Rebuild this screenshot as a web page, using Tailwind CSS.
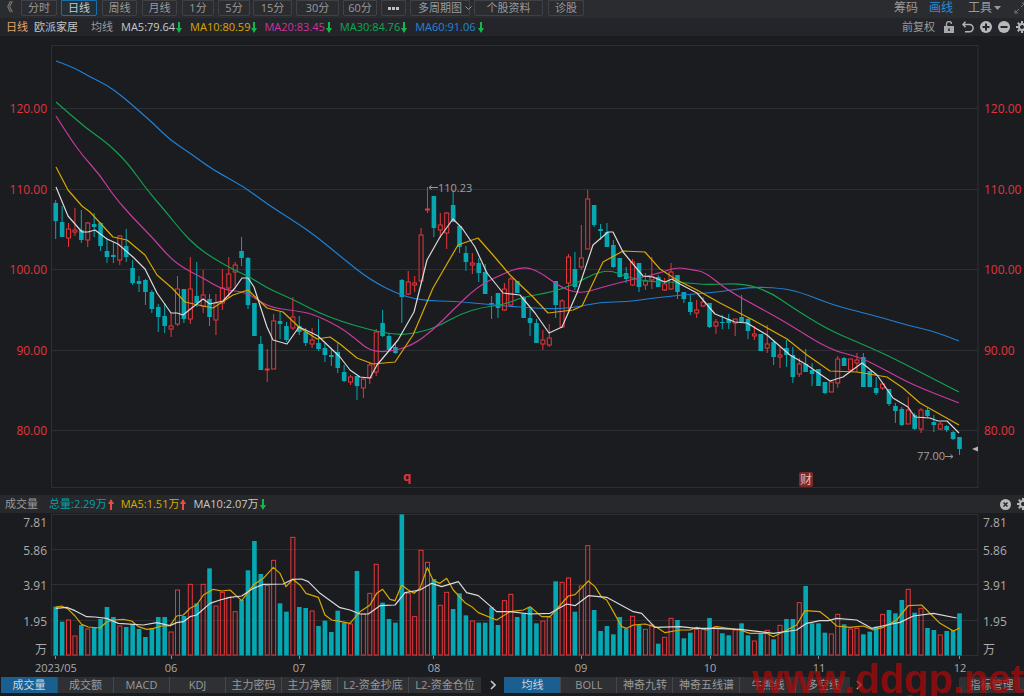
<!DOCTYPE html>
<html lang="en">
<head>
    <meta charset="UTF-8">
    <title>欧派家居 日线</title>
    <script src="https://cdn.jsdelivr.net/npm/@tailwindcss/browser@4"></script>
</head>
<body class="bg-[#1b1c20] font-['Open_Sans','Noto_Sans_CJK_SC',sans-serif] text-[11px] text-[#9a9a9a]">
<div class="relative w-[1024px] h-[696px] overflow-hidden flex flex-col">

    <!-- Period bar -->
    <div class="h-[18px] bg-[#2a2c30] flex items-start shrink-0 leading-[14px] text-center whitespace-nowrap">
        <div class="w-[21px] text-left text-[12px] leading-[15px] text-[#a0a0a0]"><span class="block ml-[1px]">《</span></div>
        <div class="w-[36px] h-[16px] border border-[#3f4146] rounded-b-[2px]">分时</div>
        <div class="w-[36px] h-[16px] ml-[4px] border border-[#1c6ea4] rounded-b-[2px] bg-[#23303a] text-[#c9c9c9]">日线</div>
        <div class="w-[35px] h-[16px] ml-[5px] border border-[#3f4146] rounded-b-[2px]">周线</div>
        <div class="w-[35px] h-[16px] ml-[5px] border border-[#3f4146] rounded-b-[2px]">月线</div>
        <div class="w-[32px] h-[16px] ml-[5px] border border-[#3f4146] rounded-b-[2px]">1分</div>
        <div class="w-[32px] h-[16px] ml-[4px] border border-[#3f4146] rounded-b-[2px]">5分</div>
        <div class="w-[39px] h-[16px] ml-[3px] border border-[#3f4146] rounded-b-[2px]">15分</div>
        <div class="w-[43px] h-[16px] ml-[4px] border border-[#3f4146] rounded-b-[2px]">30分</div>
        <div class="w-[34px] h-[16px] ml-[4px] border border-[#3f4146] rounded-b-[2px]">60分</div>
        <div class="w-[25px] h-[16px] ml-[4px] border border-[#3f4146] rounded-b-[2px] flex items-center justify-center gap-[1px]">
            <span class="w-[3px] h-[3px] bg-[#c0c0c0]"></span><span class="w-[3px] h-[3px] bg-[#c0c0c0]"></span><span class="w-[3px] h-[3px] bg-[#c0c0c0]"></span>
        </div>
        <div class="w-[60px] h-[16px] ml-[4px] pl-[7px] border border-[#3f4146] rounded-b-[2px] flex items-center gap-[3px]"><span>多周期图</span>
            <svg class="shrink-0" width="7" height="5" viewBox="0 0 7 5" fill="none" stroke="#9a9a9a"><path d="M.5 .5 3.5 3.5 6.5 .5"/></svg>
        </div>
        <div class="w-[69px] h-[16px] ml-[4px] border border-[#3f4146] rounded-b-[2px]">个股资料</div>
        <div class="w-[36px] h-[16px] ml-[5px] border border-[#3f4146] rounded-b-[2px]">诊股</div>
        <div class="ml-auto flex items-center h-[15px] text-[12px]">
            <span>筹码</span>
            <span class="ml-[11px] text-[#2b8fd8]">画线</span>
            <span class="ml-[15px]">工具</span>
            <svg class="ml-[2px]" width="7" height="4" viewBox="0 0 7 4" fill="#9a9a9a"><path d="M0 0h7L3.5 4z"/></svg>
            <svg class="ml-[13px] mr-[-2px]" width="12" height="12" viewBox="0 0 12 12" fill="none" stroke="#777"><path d="M7 5l4-4M8 1h3v3M5 7l-4 4M1 8v3h3"/></svg>
        </div>
    </div>

    <!-- MA legend -->
    <div class="h-[18px] bg-[#23252a] flex items-center shrink-0 leading-[18px] whitespace-nowrap">
        <span class="ml-[6px] text-[#e3a566]">日线</span>
        <span class="ml-[6px] text-[#c4c4c4]">欧派家居</span>
        <span class="ml-[13px]">均线</span>
        <span class="ml-[8px] text-[#c8c8c8]">MA5:79.64</span>
        <svg class="ml-[1px]" width="6" height="11" viewBox="0 0 6 11" fill="#12b84c"><path d="M2 0h2v6h2l-3 5-3-5h2z"/></svg>
        <span class="ml-[8px] text-[#dca800]">MA10:80.59</span>
        <svg class="ml-[1px]" width="6" height="11" viewBox="0 0 6 11" fill="#12b84c"><path d="M2 0h2v6h2l-3 5-3-5h2z"/></svg>
        <span class="ml-[7px] text-[#c9369c]">MA20:83.45</span>
        <svg class="ml-[1px]" width="6" height="11" viewBox="0 0 6 11" fill="#12b84c"><path d="M2 0h2v6h2l-3 5-3-5h2z"/></svg>
        <span class="ml-[8px] text-[#12a650]">MA30:84.76</span>
        <svg class="ml-[1px]" width="6" height="11" viewBox="0 0 6 11" fill="#12b84c"><path d="M2 0h2v6h2l-3 5-3-5h2z"/></svg>
        <span class="ml-[8px] text-[#2384d8]">MA60:91.06</span>
        <svg class="ml-[2px]" width="6" height="11" viewBox="0 0 6 11" fill="#12b84c"><path d="M2 0h2v6h2l-3 5-3-5h2z"/></svg>
        <span class="ml-auto">前复权</span>
        <svg class="ml-[9px]" width="10" height="12" viewBox="0 0 10 12" fill="#a8a8a8"><path d="M0 5h10v7H0z"/><path d="M2.5 5V3a2.5 2.5 0 0 1 5 0" fill="none" stroke="#a8a8a8" stroke-width="1.4"/><path d="M4.2 7.5h1.6v2.5H4.2z" fill="#23252a"/></svg>
        <svg class="ml-[8px]" width="12" height="12" viewBox="0 0 12 12" fill="none" stroke="#b4b4b4" stroke-width="1.5"><path d="M1 3.5h6.5a3.6 3.6 0 0 1 0 7.2H3"/><path d="M3.5 .8 1 3.5l2.5 2.7"/></svg>
        <svg class="ml-[6px]" width="12" height="12" viewBox="0 0 12 12"><circle cx="6" cy="6" r="6" fill="#b8b8b8"/><path d="M5 2.500h2V5h2.500v2H7v2.500H5V7H2.500V5H5z" fill="#23252a"/></svg>
        <svg class="ml-[6px]" width="12" height="12" viewBox="0 0 12 12"><circle cx="6" cy="6" r="6" fill="#b8b8b8"/><path d="M2.500 5h7v2h-7z" fill="#23252a"/></svg>
        <svg class="ml-[6px] mr-[-4px] shrink-0" width="12" height="12" viewBox="0 0 12 12" fill="none" stroke="#b8b8b8"><circle cx="6" cy="6" r="3" stroke-width="2"/><path stroke-width="2" d="M6 0v2M6 10v2M0 6h2M10 6h2M1.800 1.800l1.400 1.400M8.800 8.800l1.400 1.400M10.200 1.800 8.800 3.200M3.200 8.800l-1.400 1.400"/></svg>
    </div>

    <!-- Price chart -->
    <svg class="shrink-0" width="1024" height="459" viewBox="0 36 1024 459">
        <g stroke="#2e2f33" fill="none">
            <path d="M51.500 487.500V45.500H978V487.500H51.500"/>
            <path d="M52 108.500H978M52 189.500H978M52 269.500H978M52 350.500H978M52 430.500H978"/>
        </g>
        <g id="candles"></g>
        <g id="maLines" fill="none" stroke-width="1.200" stroke-linejoin="round"></g>
        <g class="fill-[#e0353b] text-[12px]">
            <text x="47" y="113" text-anchor="end">120.00</text>
            <text x="47" y="194" text-anchor="end">110.00</text>
            <text x="47" y="274" text-anchor="end">100.00</text>
            <text x="47" y="355" text-anchor="end">90.00</text>
            <text x="47" y="435" text-anchor="end">80.00</text>
            <text x="984" y="113">120.00</text>
            <text x="984" y="194">110.00</text>
            <text x="984" y="274">100.00</text>
            <text x="984" y="355">90.00</text>
            <text x="984" y="435">80.00</text>
        </g>
        <path d="M438 187.500H429M431.500 185.500 429 187.500l2.500 2" fill="none" stroke="#9a9a9a"/>
        <text x="438" y="192" class="fill-[#a0a0a0] text-[11px]">110.23</text>
        <text x="917" y="460" class="fill-[#a0a0a0] text-[11px]">77.00</text>
        <path d="M945 456.500H953M950.500 454.500 953 456.500l-2.500 2" fill="none" stroke="#9a9a9a"/>
        <path d="M972 449 978 446.500v5z" fill="#b4b4b4"/>
        <text x="403" y="481" class="fill-[#e0353b] text-[13px] font-bold">q</text>
        <rect x="799" y="472" width="14" height="15" rx="2" fill="#7a2a2c"/>
        <text x="806" y="484" text-anchor="middle" class="fill-[#e4b8a8] text-[12px]">财</text>
    </svg>

    <!-- Volume header -->
    <div class="h-[18px] bg-[#26282b] flex items-center shrink-0 leading-[18px] whitespace-nowrap">
        <span class="ml-[5px]">成交量</span>
        <span class="ml-[11px] text-[#06a0a8]">总量:2.29万</span>
        <svg class="ml-[1px]" width="6" height="11" viewBox="0 0 6 11" fill="#ef4a4a"><path d="M3 0l3 5H4v6H2V5H0z"/></svg>
        <span class="ml-[7px] text-[#dca800]">MA5:1.51万</span>
        <svg class="ml-[1px]" width="6" height="11" viewBox="0 0 6 11" fill="#ef4a4a"><path d="M3 0l3 5H4v6H2V5H0z"/></svg>
        <span class="ml-[7px] text-[#c8c8c8]">MA10:2.07万</span>
        <svg class="ml-[1px]" width="6" height="11" viewBox="0 0 6 11" fill="#12b84c"><path d="M2 0h2v6h2l-3 5-3-5h2z"/></svg>
        <svg class="ml-auto" width="11" height="11" viewBox="0 0 11 11"><circle cx="5.500" cy="5.500" r="5.500" fill="#b8b8b8"/><path d="M3.500 3.500l4 4M7.500 3.500l-4 4" stroke="#26282b" stroke-width="1.500"/></svg>
        <svg class="ml-[6px] mr-[-5px] shrink-0" width="12" height="12" viewBox="0 0 12 12" fill="none" stroke="#b8b8b8"><circle cx="6" cy="6" r="3" stroke-width="2"/><path stroke-width="2" d="M6 0v2M6 10v2M0 6h2M10 6h2M1.800 1.800l1.400 1.400M8.800 8.800l1.400 1.400M10.200 1.800 8.800 3.200M3.200 8.800l-1.400 1.400"/></svg>
    </div>

    <!-- Volume chart -->
    <svg class="shrink-0" width="1024" height="164" viewBox="0 513 1024 164">
        <g stroke="#2e2f33" fill="none">
            <path d="M51.500 655.500V514.500H978V655.500H51.500"/>
            <path d="M52 549.500H978M52 584.500H978M52 620.500H978"/>
            <path stroke="#8a8a8a" d="M55.500 656v3M171.500 656v3M299.500 656v3M433.500 656v3M581.500 656v3M710.500 656v3M818.500 656v3M959.500 656v3"/>
        </g>
        <g id="bars"></g>
        <g id="volLines" fill="none" stroke-width="1.200" stroke-linejoin="round"></g>
        <g class="fill-[#ababab] text-[12px]">
            <text x="47" y="527" text-anchor="end">7.81</text>
            <text x="47" y="555" text-anchor="end">5.86</text>
            <text x="47" y="590" text-anchor="end">3.91</text>
            <text x="47" y="626" text-anchor="end">1.95</text>
            <text x="47" y="654" text-anchor="end">万</text>
            <text x="983" y="527">7.81</text>
            <text x="983" y="555">5.86</text>
            <text x="983" y="590">3.91</text>
            <text x="983" y="626">1.95</text>
            <text x="983" y="654">万</text>
        </g>
        <g class="fill-[#ababab] text-[11px]">
            <text x="35" y="672">2023/05</text>
            <text x="171" y="672" text-anchor="middle">06</text>
            <text x="299" y="672" text-anchor="middle">07</text>
            <text x="434" y="672" text-anchor="middle">08</text>
            <text x="581" y="672" text-anchor="middle">09</text>
            <text x="710" y="672" text-anchor="middle">10</text>
            <text x="819" y="672" text-anchor="middle">11</text>
            <text x="960" y="672" text-anchor="middle">12</text>
        </g>
    </svg>

    <!-- Indicator tabs -->
    <div class="h-[16px] flex items-stretch shrink-0 leading-[15px] text-center whitespace-nowrap">
        <div class="flex bg-[#2e3034] ml-[1px]">
            <div class="w-[56px] bg-[#1a5f8f] text-[#c8d6e0]">成交量</div>
            <div class="w-[56px] border-l border-[#44464b]">成交额</div>
            <div class="w-[56px] border-l border-[#44464b]">MACD</div>
            <div class="w-[56px] border-l border-[#44464b]">KDJ</div>
            <div class="w-[56px] border-l border-[#44464b]">主力密码</div>
            <div class="w-[56px] border-l border-[#44464b]">主力净额</div>
            <div class="w-[71px] border-l border-[#44464b]">L2-资金抄底</div>
            <div class="w-[73px] border-l border-[#44464b]">L2-资金仓位</div>
        </div>
        <div class="w-[24px] flex items-center justify-center">
            <svg width="6" height="10" viewBox="0 0 6 10" fill="none" stroke="#c8c8c8" stroke-width="1.600"><path d="M1 1l4 4-4 4"/></svg>
        </div>
        <div class="flex bg-[#2e3034]">
            <div class="w-[56px] bg-[#1a5f8f] text-[#c8d6e0]">均线</div>
            <div class="w-[56px] border-l border-[#44464b]">BOLL</div>
            <div class="w-[56px] border-l border-[#44464b]">神奇九转</div>
            <div class="w-[67px] border-l border-[#44464b]">神奇五线谱</div>
            <div class="w-[56px] border-l border-[#44464b]">牛熊线</div>
            <div class="w-[55px] border-l border-[#44464b]">多空线</div>
        </div>
        <div class="w-[18px] flex items-center justify-center">
            <svg width="6" height="10" viewBox="0 0 6 10" fill="none" stroke="#c8c8c8" stroke-width="1.600"><path d="M1 1l4 4-4 4"/></svg>
        </div>
        <div class="w-[65px] ml-[91px] shrink-0 bg-[#2e3034] rounded-[2px]">指标管理</div>
    </div>

    <!-- Watermark -->
    <div class="absolute left-[752px] top-[656px] text-[40px] leading-[46px] font-bold font-['Liberation_Sans',sans-serif] text-[#a80a0a]/75 whitespace-nowrap">www.ddgp.net</div>
</div>

<script>
    const TEAL = '#05a8b2', RED = '#e8373b';
    const xAt = i => 55.7 + i * 6.41;

    // bodyTop, bodyBottom, wickTop, wickBottom, up
    const candles = [
        [203,221,200,239,0],[222,237,206,237,0],[229,238,223,247,1],[230,232,208,236,1],[230,240,210,243,0],
        [223,240,222,247,1],[224,227,213,237,0],[223,246,222,251,0],[251,257,238,263,0],[255,257,242,263,0],
        [236,260,235,265,1],[246,257,229,262,0],[268,283,260,285,0],[281,284,276,292,0],[280,292,279,305,0],
        [292,309,290,313,0],[307,317,304,332,0],[316,326,303,333,0],[326,329,313,337,1],[289,324,276,326,1],
        [289,319,289,323,0],[289,319,257,324,1],[296,303,262,307,0],[295,306,270,313,1],[299,317,294,326,0],
        [303,320,294,335,1],[288,303,269,310,1],[274,288,257,297,1],[265,272,262,288,1],[251,258,237,266,0],
        [258,305,257,309,0],[303,336,303,336,0],[344,370,336,370,0],[369,370,349,382,1],[321,369,314,369,1],
        [321,324,312,339,0],[326,340,322,342,0],[317,328,297,330,1],[326,332,316,335,0],[332,343,328,346,0],
        [340,344,328,348,1],[343,349,319,351,0],[348,355,343,362,0],[355,357,348,366,0],[352,368,343,373,0],
        [372,381,365,382,0],[377,382,375,385,1],[376,386,376,400,0],[379,388,377,398,1],[365,378,362,384,1],
        [332,372,329,376,1],[323,336,310,337,0],[336,350,333,351,0],[347,353,343,354,0],[280,297,279,323,0],
        [282,294,271,295,1],[283,285,276,292,1],[235,281,228,282,1],[209,210,187,213,1],[196,228,196,237,0],
        [225,230,213,238,1],[213,233,212,249,1],[205,222,190,222,0],[226,247,226,253,0],[253,262,246,271,0],
        [263,265,253,274,1],[263,273,258,282,0],[272,294,264,294,0],[303,304,296,319,0],[293,308,293,318,0],
        [289,310,283,311,1],[279,305,277,307,1],[281,293,281,293,0],[297,318,296,318,0],[318,323,309,336,0],
        [323,343,319,343,0],[340,344,330,350,1],[338,345,324,347,1],[281,305,281,318,0],[301,327,299,328,1],
        [257,283,254,310,1],[269,287,252,290,0],[258,267,225,270,1],[199,249,190,249,1],[205,225,205,227,0],
        [229,231,224,240,0],[232,247,223,247,0],[245,267,240,268,0],[258,277,258,277,0],[273,279,267,283,0],
        [262,285,259,286,1],[263,287,263,292,0],[281,285,273,290,1],[277,280,257,289,1],[277,287,275,287,0],
        [284,290,278,291,1],[272,289,263,290,1],[275,292,275,299,0],[292,299,292,303,0],[302,312,295,315,0],
        [310,313,300,318,1],[302,306,297,307,1],[303,327,303,328,0],[322,326,319,334,1],[322,323,315,329,0],
        [319,323,314,329,0],[319,323,319,336,1],[317,322,295,322,0],[319,331,318,339,0],[334,336,326,340,1],
        [334,351,334,351,0],[344,348,325,353,1],[342,357,340,365,0],[355,357,347,368,1],[348,355,340,367,0],
        [355,377,347,383,0],[364,374,358,377,1],[364,372,349,372,0],[370,374,363,386,0],[369,386,369,386,0],
        [382,393,382,394,0],[382,392,380,392,1],[359,383,356,388,1],[358,366,357,366,0],[359,370,359,371,1],
        [360,363,353,372,1],[357,387,353,387,0],[371,387,371,387,0],[388,393,377,395,0],[384,388,383,390,1],
        [389,404,389,406,0],[406,411,403,423,0],[409,425,407,426,0],[410,424,397,424,1],[415,429,413,430,0],
        [410,429,408,433,1],[410,416,408,417,0],[422,425,415,432,0],[424,429,422,430,1],[426,430,425,432,0],
        [432,439,431,440,0],[437,449,437,455,0]
    ];

    // [top in zoomed px (y = 490 + t / 3), up]
    const volumes = [
        [350,0],[395,0],[390,1],[438,1],[405,0],[417,1],[412,0],[387,0],[351,0],[381,0],[408,1],[411,0],[402,0],[417,0],[441,0],
        [417,0],[381,0],[381,0],[426,1],[300,1],[378,0],[283,1],[340,0],[283,1],[235,0],[348,1],[307,1],[322,1],[365,1],[330,0],
        [241,0],[153,0],[252,0],[286,1],[211,1],[340,0],[365,0],[142,1],[351,0],[354,0],[363,1],[408,0],[392,0],[426,0],[362,0],
        [398,0],[402,1],[243,0],[372,1],[310,1],[223,1],[338,0],[387,0],[398,0],[73,0],[310,1],[380,1],[181,1],[217,1],[267,0],
        [346,1],[307,1],[357,0],[310,0],[376,0],[393,1],[398,0],[398,0],[352,0],[405,0],[332,1],[313,1],[381,0],[370,0],[352,0],
        [400,0],[393,1],[382,1],[274,0],[277,1],[264,1],[365,0],[288,1],[167,1],[360,0],[423,0],[408,0],[433,0],[381,0],[416,0],
        [379,1],[405,0],[418,1],[405,1],[461,0],[442,1],[385,1],[390,0],[445,0],[428,0],[418,1],[418,1],[384,0],[410,1],[430,0],
        [436,0],[420,1],[400,0],[436,0],[453,1],[430,0],[421,1],[448,0],[406,1],[387,0],[387,0],[338,1],[288,0],[400,0],[400,0],
        [428,0],[432,1],[373,1],[403,0],[417,1],[415,1],[433,0],[425,0],[410,0],[373,1],[360,0],[370,0],[330,0],[298,1],[368,0],
        [355,1],[414,0],[420,0],[435,1],[423,0],[420,0],[370,0]
    ];

    // slow averages are rounded, fast ones keep their corners
    const slowLines = [
        ['#1f80d4', [[56,61],[73,67],[90,77],[107,85],[123,97],[138,110],[155,125],[170,140],[190,153],[213,170],[243,186],[267,204],[297,223],[317,237],[340,256],[370,280],[402,296],[427,301],[453,301],[493,305],[547,309],[573,308],[600,302],[627,302],[653,298],[693,294],[720,292],[750,287],[780,288],[800,292],[833,305],[860,312],[883,318],[910,326],[933,331],[959,341]]],
        ['#12a150', [[56,102],[80,123],[93,133],[107,143],[127,162],[147,190],[167,213],[182,232],[197,247],[213,258],[232,269],[250,277],[267,288],[283,295],[300,303],[317,312],[340,321],[370,330],[397,335],[417,333],[437,327],[460,314],[483,307],[503,305],[523,297],[553,292],[577,283],[593,274],[610,270],[627,277],[650,282],[680,282],[707,285],[743,283],[770,292],[793,308],[827,329],[857,342],[887,355],[920,372],[959,392]]],
        ['#c93a9e', [[56,116],[68,135],[82,155],[100,175],[113,195],[133,218],[152,237],[170,258],[185,269],[203,278],[223,290],[247,292],[267,307],[297,311],[313,314],[340,327],[357,340],[370,351],[390,352],[413,345],[433,330],[453,310],[477,287],[500,275],[523,266],[540,272],[560,287],[580,294],[603,287],[630,280],[660,273],[677,267],[693,270],[705,272],[727,290],[760,308],[787,323],[830,350],[860,357],[887,371],[913,385],[959,403]]]
    ];
    const fastLines = [
        ['#d8a800', [[56,167],[68,190],[82,206],[90,212],[113,237],[127,240],[145,255],[157,275],[172,288],[185,302],[203,306],[213,308],[233,295],[248,290],[267,308],[283,312],[300,328],[317,339],[330,337],[340,344],[357,358],[373,364],[395,362],[413,335],[433,288],[458,245],[478,238],[493,255],[510,275],[533,297],[548,313],[573,310],[582,306],[603,262],[623,251],[645,252],[660,269],[677,280],[697,290],[720,303],[753,320],[787,339],[807,355],[830,371],[857,372],[887,377],[903,388],[920,403],[959,425]]],
        ['#d9d9d9', [[56,187],[68,216],[82,232],[88,232],[95,230],[107,239],[118,244],[133,257],[145,269],[157,293],[171,313],[177,313],[183,315],[203,299],[210,304],[223,301],[235,288],[242,278],[248,278],[254,287],[267,327],[273,340],[287,344],[299,327],[312,333],[318,336],[340,357],[350,370],[360,377],[370,378],[377,365],[398,340],[414,312],[427,260],[440,237],[453,219],[462,228],[475,247],[487,273],[503,293],[520,295],[535,313],[549,333],[562,327],[577,293],[593,245],[608,232],[613,232],[623,252],[643,276],[653,277],[665,282],[672,279],[680,284],[697,293],[715,314],[735,322],[747,323],[767,335],[790,355],[807,365],[830,381],[843,377],[862,363],[877,375],[893,398],[908,407],[915,417],[930,418],[938,421],[947,421],[959,433]]]
    ];

    // zoom crops of the volume pane, x offsets 0 / 340 / 680
    const conv = (pts, off) => pts.map(([x, y]) => [off + x / 3, 490 + y / 3]);
    const volLines = [
        ['#d8a800', [
            ...conv([[167,351],[185,348],[205,358],[225,378],[245,403],[265,411],[300,414],[320,396],[340,390],[370,388],[395,393],[415,410],[440,418],[460,415],[485,408],[510,407],[530,378],[550,375],[570,355],[590,345],[610,315],[640,298],[665,303],[690,300],[725,332],[760,285],[790,265],[820,232],[840,250],[858,290],[878,268],[900,285],[918,310],[955,322],[975,375],[995,390],[1020,394]], 0),
            ...conv([[30,400],[60,365],[90,345],[110,310],[128,298],[150,328],[165,332],[185,285],[205,300],[222,310],[240,295],[262,233],[280,272],[300,280],[320,265],[340,300],[375,338],[395,350],[415,368],[470,390],[510,365],[550,360],[570,350],[605,380],[630,380],[685,318],[705,314],[745,273],[765,290],[785,322],[800,330],[820,365],[845,410],[860,415],[880,405],[915,402],[950,412],[975,428],[1020,420]], 340),
            ...conv([[30,420],[50,412],[80,420],[110,410],[180,420],[210,430],[260,430],[280,440],[310,425],[350,405],[375,362],[420,365],[445,385],[470,408],[510,412],[550,408],[580,420],[610,412],[650,390],[685,347],[725,345],[780,400],[820,423],[839,414]], 680)
        ]],
        ['#d9d9d9', [
            ...conv([[167,355],[200,352],[225,362],[260,380],[285,381],[320,385],[355,400],[430,405],[470,398],[510,407],[530,398],[550,395],[570,380],[590,375],[630,340],[660,330],[690,322],[725,318],[760,295],[790,283],[850,282],[878,268],[905,267],[925,275],[960,310],[1020,353]], 0),
            ...conv([[30,360],[60,372],[85,372],[120,347],[165,345],[195,308],[240,300],[275,280],[305,290],[355,275],[380,308],[415,317],[470,365],[510,365],[570,372],[630,370],[680,342],[705,347],[745,317],[800,322],[880,365],[905,370],[945,412],[1020,410]], 340),
            ...conv([[50,415],[100,415],[180,418],[280,430],[350,420],[380,400],[420,392],[445,392],[470,385],[530,390],[575,415],[620,405],[660,397],[700,378],[760,370],[830,384]], 680)
        ]]
    ];

    // Render candles
    document.getElementById('candles').innerHTML = candles.map(([t, b, h, l, up], i) => {
        const x = xAt(i);
        const color = up ? RED : TEAL;
        const wick = `<path d="M${x} ${h}V${t}M${x} ${b}V${l}" stroke="${color}"/>`;
        return wick + (up
            ? `<rect x="${x - 2}" y="${t}" width="4" height="${Math.max(b - t, 1)}" fill="none" stroke="${color}"/>`
            : `<rect x="${x - 2.3}" y="${t}" width="4.6" height="${Math.max(b - t, 1)}" fill="${color}"/>`);
    }).join('');

    // Render volume bars
    document.getElementById('bars').innerHTML = volumes.map(([t, up], i) => {
        const x = xAt(i);
        const y = 490 + t / 3;
        return up
            ? `<rect x="${x - 2}" y="${y}" width="4" height="${655 - y}" fill="none" stroke="${RED}"/>`
            : `<rect x="${x - 2.3}" y="${y}" width="4.6" height="${655.5 - y}" fill="${TEAL}"/>`;
    }).join('');

    // Render average lines
    const smooth = ([color, pts]) => {
        let d = `M${pts[0].join(' ')}`;
        for (let i = 1; i < pts.length - 1; i++) {
            const mx = (pts[i][0] + pts[i + 1][0]) / 2, my = (pts[i][1] + pts[i + 1][1]) / 2;
            d += `Q${pts[i].join(' ')} ${mx} ${my}`;
        }
        d += `L${pts[pts.length - 1].join(' ')}`;
        return `<path stroke="${color}" d="${d}"/>`;
    };
    const line = ([color, pts]) => `<polyline stroke="${color}" points="${pts.map(p => p.join(',')).join(' ')}"/>`;
    document.getElementById('maLines').innerHTML = slowLines.map(smooth).join('') + fastLines.map(line).join('');
    document.getElementById('volLines').innerHTML = volLines.map(line).join('');
</script>
</body>
</html>
